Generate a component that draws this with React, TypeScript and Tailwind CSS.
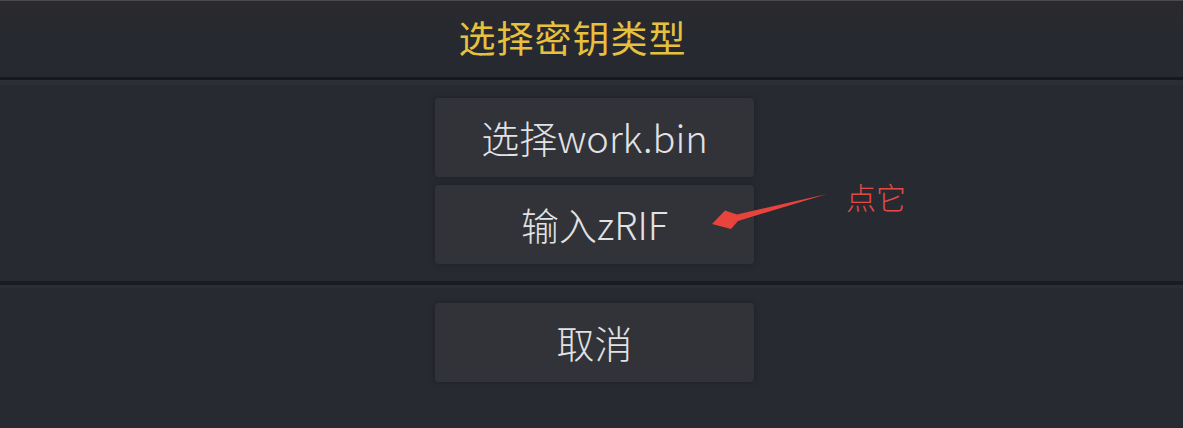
import type { ReactNode } from 'react';

function DialogButton({ children }: { children: ReactNode }) {
  return (
    <button className="flex h-[79px] w-[319px] items-center justify-center rounded-[4px] bg-[#313339] pb-px text-[38px] font-light leading-none text-[#e2e2e4] shadow-[0_0_6px_rgba(0,0,0,0.25)]">
      {children}
    </button>
  );
}

export default function App() {
  return (
    <div
      className="relative flex h-[428px] w-[1183px] flex-col overflow-hidden bg-[#272a31]"
      style={{ fontFamily: '"Noto Sans CJK SC", "Noto Sans", sans-serif' }}
    >
      <div className="h-px bg-[#4b4b4f]" />
      <div className="flex h-[76px] items-center justify-center bg-gradient-to-b from-[#2a2a2e] via-[#272930] to-[#262931]">
        <h1 className="mr-[38px] pb-1 text-[37px] font-normal leading-none tracking-[1px] text-[#e5c13e]">选择密钥类型</h1>
      </div>
      <div className="h-[3px] bg-[#17181c]" />
      <div className="h-[5px] bg-[#2b2e35]" />

      <div className="flex flex-col items-center gap-[8px] pb-[17px] pl-[6px] pt-[13px]">
        <DialogButton>选择work.bin</DialogButton>
        <DialogButton>输入zRIF</DialogButton>
      </div>

      <div className="h-[4px] bg-[#1b1c20]" />
      <div className="h-[3px] bg-[#2b2e35]" />

      <div className="flex justify-center pl-[6px] pt-[15px]">
        <DialogButton>取消</DialogButton>
      </div>

      {/* annotation overlay */}
      <svg className="pointer-events-none absolute inset-0" width="1183" height="428" viewBox="0 0 1183 428">
        <path d="M827 194 L737 214.5 L725 210.5 L712 224 L731 229 L738 221 Z" fill="#e8433d" />
      </svg>
      <span className="absolute left-[846px] top-[181px] text-[30px] font-light leading-none text-[#e34a44]">点它</span>
    </div>
  );
}
